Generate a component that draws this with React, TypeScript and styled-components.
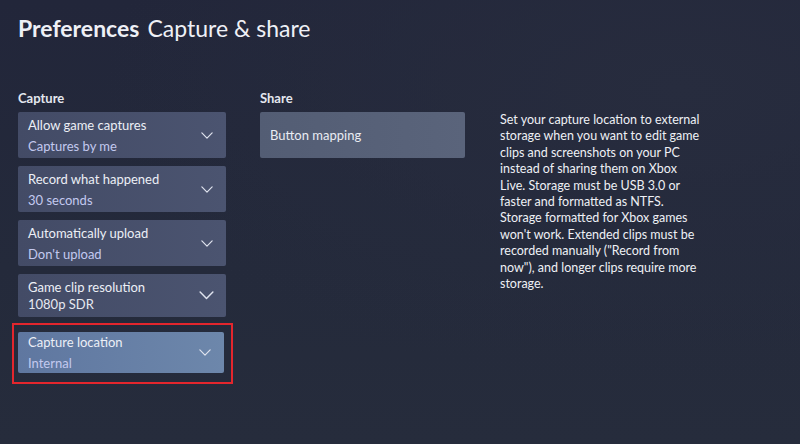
import React from "react";
import styled, { createGlobalStyle } from "styled-components";

const GlobalStyle = createGlobalStyle`
  html, body {
    margin: 0;
    padding: 0;
    background: #242838;
  }
  * {
    box-sizing: border-box;
  }
`;

type Setting = {
  title: string;
  value: string;
  big?: boolean;
};

const captureSettings: Setting[] = [
  { title: "Allow game captures", value: "Captures by me" },
  { title: "Record what happened", value: "30 seconds" },
  { title: "Automatically upload", value: "Don't upload" },
  { title: "Game clip resolution", value: "1080p SDR", big: true },
];

const Chevron = ({ size = 12 }: { size?: number }) => (
  <svg width={size} height={size / 2 + 1} viewBox="0 0 14 8" fill="none">
    <path
      d="M1 1l6 6 6-6"
      stroke="#dfe3ee"
      strokeWidth="1.4"
      strokeLinecap="round"
      strokeLinejoin="round"
    />
  </svg>
);

export default function App() {
  return (
    <>
      <GlobalStyle />
      <Page>
        <Header>
          <strong>Preferences</strong>
          <span>Capture &amp; share</span>
        </Header>
        <Columns>
          <Column>
            <SectionLabel>Capture</SectionLabel>
            <List>
              {captureSettings.map((s) => (
                <Card key={s.title} $big={s.big}>
                  <CardText>
                    <CardTitle>{s.title}</CardTitle>
                    <CardValue $plain={s.big}>{s.value}</CardValue>
                  </CardText>
                  <Chevron size={s.big ? 15 : 12} />
                </Card>
              ))}
              <Highlight>
                <Card $active>
                  <CardText>
                    <CardTitle>Capture location</CardTitle>
                    <CardValue>Internal</CardValue>
                  </CardText>
                  <Chevron size={12} />
                </Card>
              </Highlight>
            </List>
          </Column>
          <Column $narrow>
            <SectionLabel>Share</SectionLabel>
            <ShareButton>Button mapping</ShareButton>
          </Column>
          <Description>
            Set your capture location to external storage when you want to edit
            game clips and screenshots on your PC instead of sharing them on
            Xbox Live. Storage must be USB 3.0 or faster and formatted as NTFS.
            Storage formatted for Xbox games won't work. Extended clips must be
            recorded manually ("Record from now"), and longer clips require
            more storage.
          </Description>
        </Columns>
      </Page>
    </>
  );
}

const Page = styled.div`
  width: 800px;
  height: 444px;
  overflow: hidden;
  padding: 12px 0 0 18px;
  font-family: Lato, "Open Sans", sans-serif;
  color: #e9ecf3;
  background: radial-gradient(
      ellipse at 85% 20%,
      #272c3e 0%,
      rgba(39, 44, 62, 0) 60%
    ),
    linear-gradient(180deg, #22263a 0%, #242a3b 60%, #262c3c 100%);
`;

const Header = styled.h1`
  margin: 0;
  display: flex;
  align-items: baseline;
  gap: 8px;
  font-size: 23px;
  line-height: 32px;
  font-weight: 400;
  color: #eef0f6;

  strong {
    font-weight: 700;
  }
`;

const Columns = styled.div`
  display: flex;
  align-items: flex-start;
  margin-top: 46px;
`;

const Column = styled.div<{ $narrow?: boolean }>`
  display: flex;
  flex-direction: column;
  width: ${(p) => (p.$narrow ? 240 : 242)}px;
`;

const SectionLabel = styled.div`
  font-size: 13px;
  font-weight: 700;
  color: #e4e7ef;
  height: 16px;
  line-height: 16px;
  margin-bottom: 6px;
`;

const List = styled.div`
  display: flex;
  flex-direction: column;
  gap: 8px;
`;

const Card = styled.div<{ $big?: boolean; $active?: boolean }>`
  display: flex;
  align-items: center;
  justify-content: space-between;
  width: ${(p) => (p.$active ? 206 : 208)}px;
  height: ${(p) => (p.$active ? 41 : p.$big ? 43 : 46)}px;
  padding: 0 ${(p) => (p.$big ? 12 : 13)}px 0 10px;
  border-radius: 2px;
  background: ${(p) =>
    p.$active
      ? "linear-gradient(90deg, #5f77a0 0%, #6d87ab 100%)"
      : "linear-gradient(90deg, #434b66 0%, #4b5470 100%)"};
`;

const CardText = styled.div`
  display: flex;
  flex-direction: column;
  gap: 5px;
`;

const CardTitle = styled.div`
  font-size: 13px;
  line-height: 16px;
  color: #eceff6;
`;

const CardValue = styled.div<{ $plain?: boolean }>`
  font-size: 13px;
  line-height: 16px;
  color: ${(p) => (p.$plain ? "#e6e9f1" : "#c3c9ef")};
  margin-top: ${(p) => (p.$plain ? -4 : 0)}px;
`;

const Highlight = styled.div`
  margin: -2px 0 0 -6px;
  width: 221px;
  padding: 7px 6px 9px 4px;
  border: 2px solid #e3262d;
`;

const ShareButton = styled.div`
  display: flex;
  align-items: center;
  width: 205px;
  height: 46px;
  padding-left: 10px;
  font-size: 13px;
  color: #e9ecf3;
  border-radius: 2px;
  background: linear-gradient(90deg, #535d74 0%, #5a647b 100%);
`;

const Description = styled.p`
  margin: 22px 0 0 0;
  width: 204px;
  font-size: 12.5px;
  line-height: 16.4px;
  color: #eef0f5;
`;
